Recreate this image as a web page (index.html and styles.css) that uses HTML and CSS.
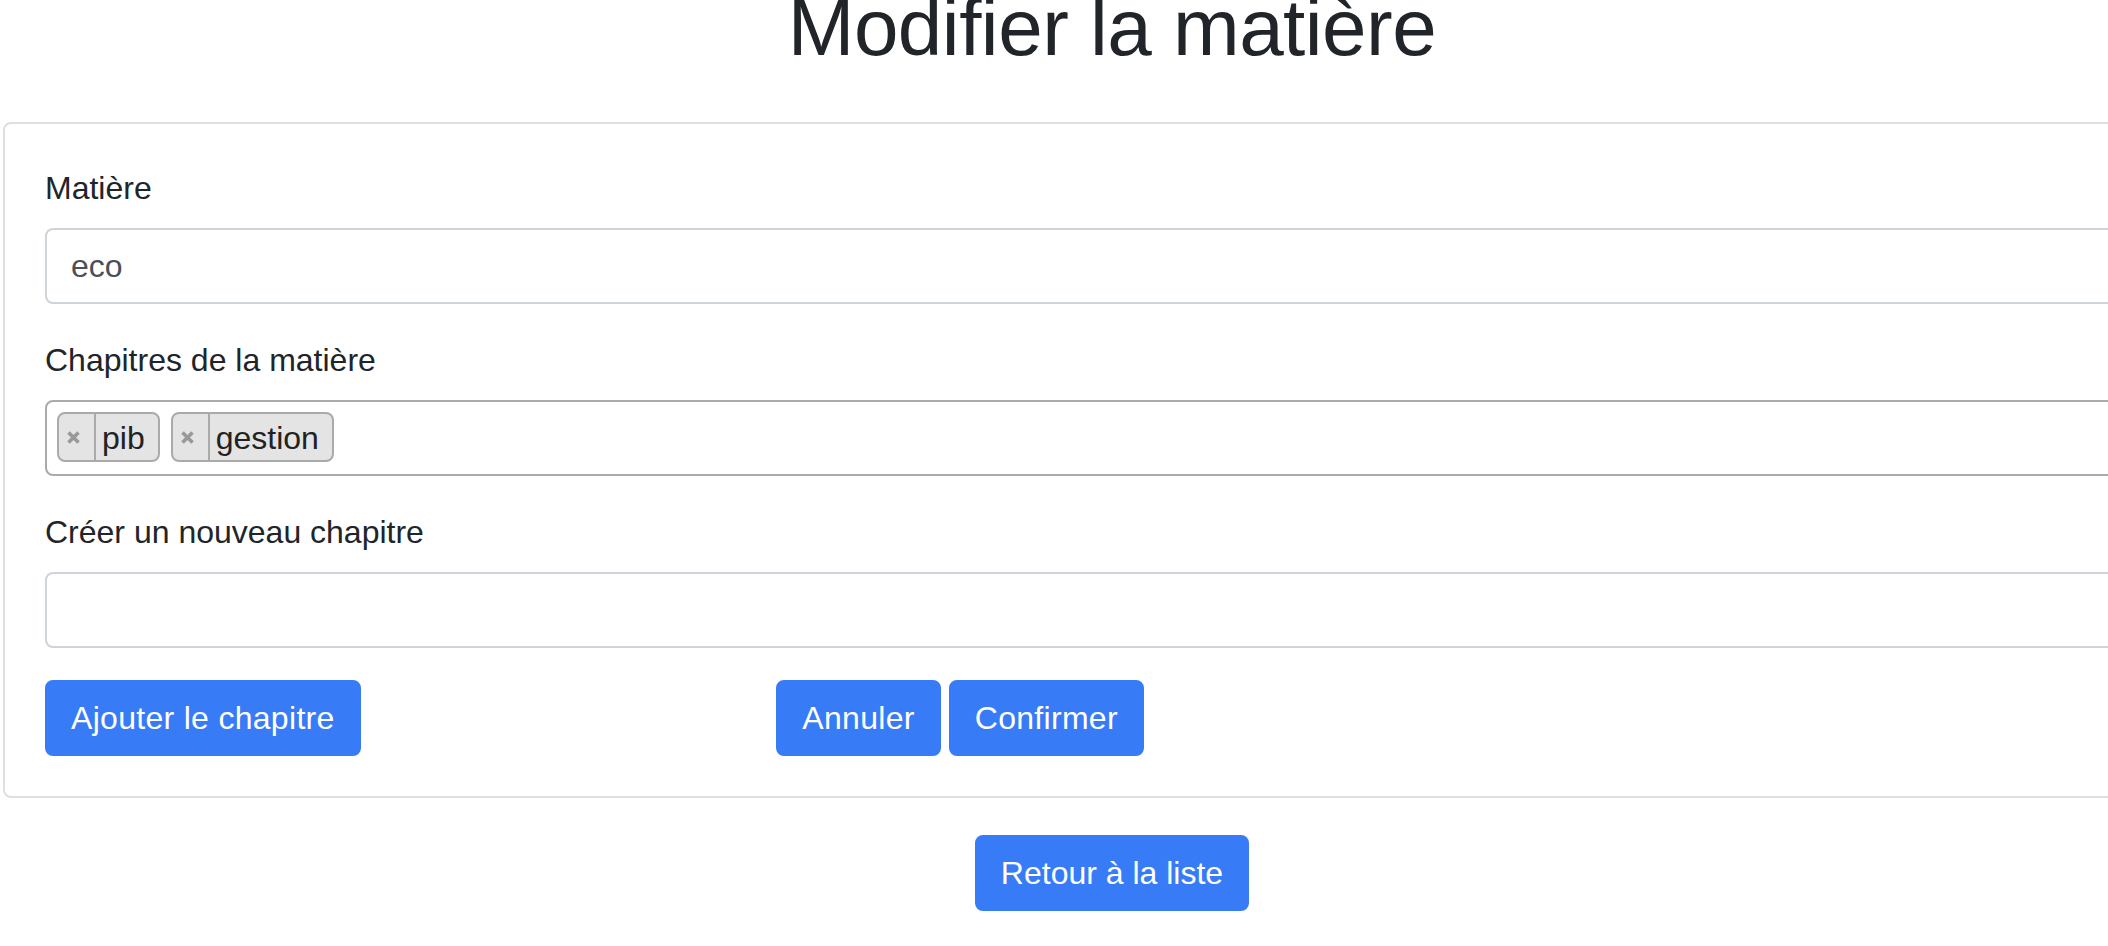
FILE: index.html
```html
<!DOCTYPE html>
<html lang="fr">
<head>
<meta charset="utf-8">
<title>Modifier la matière</title>
<link rel="stylesheet" href="styles.css">
</head>
<body>
<div class="page">
  <h1 class="title">Modifier la matière</h1>
  <div class="card">
    <div class="group">
      <label class="label">Matière</label>
      <input class="field" type="text" value="eco">
    </div>
    <div class="group">
      <label class="label">Chapitres de la matière</label>
      <div class="chips">
        <span class="chip"><span class="chip-remove"><svg width="13" height="13" viewBox="0 0 13 13"><path d="M1.5 1.5L11.5 11.5M11.5 1.5L1.5 11.5" stroke="#999" stroke-width="3.6" stroke-linecap="butt"/></svg></span><span class="chip-text">pib</span></span>
        <span class="chip"><span class="chip-remove"><svg width="13" height="13" viewBox="0 0 13 13"><path d="M1.5 1.5L11.5 11.5M11.5 1.5L1.5 11.5" stroke="#999" stroke-width="3.6" stroke-linecap="butt"/></svg></span><span class="chip-text">gestion</span></span>
      </div>
    </div>
    <div class="group">
      <label class="label">Créer un nouveau chapitre</label>
      <input class="field" type="text" value="">
    </div>
    <div class="actions">
      <div class="col"><button class="btn btn-wide">Ajouter le chapitre</button></div>
      <div class="col col-pair"><button class="btn btn-wide">Annuler</button><button class="btn btn-wide">Confirmer</button></div>
      <div class="col"></div>
    </div>
  </div>
  <div class="back">
    <button class="btn">Retour à la liste</button>
  </div>
</div>
</body>
</html>
```

FILE: styles.css
```css
html, body {
  margin: 0;
  padding: 0;
  overflow: hidden;
  background: #ffffff;
}

body {
  font-family: "Liberation Sans", Arial, sans-serif;
  color: #212529;
  font-size: 32px;
  line-height: 48px;
}

.page {
  width: 2218px;
  margin-left: 3px;
}

.title {
  margin: -20px 0 46px 0;
  font-size: 80px;
  line-height: 96px;
  font-weight: 400;
  letter-spacing: -0.5px;
  text-align: center;
  color: #212529;
}

.card {
  border: 2px solid #dfdfdf;
  border-radius: 8px;
  padding: 40px;
}

.group {
  margin-bottom: 32px;
}

.label {
  display: block;
  margin-bottom: 16px;
  line-height: 48px;
  color: #212529;
}

.field {
  display: block;
  box-sizing: border-box;
  width: 100%;
  height: 76px;
  padding: 12px 24px;
  border: 2px solid #ced4da;
  border-radius: 8px;
  font-family: "Liberation Sans", Arial, sans-serif;
  font-size: 32px;
  line-height: 48px;
  color: #495057;
  background: #ffffff;
  outline: none;
}

.chips {
  box-sizing: border-box;
  height: 76px;
  border: 2px solid #aaaaaa;
  border-radius: 8px;
  padding: 10px;
  display: flex;
  align-items: flex-start;
  gap: 11px;
}

.chip {
  box-sizing: border-box;
  height: 50px;
  display: inline-flex;
  align-items: stretch;
  background: #e4e4e4;
  border: 2px solid #aaaaaa;
  border-radius: 8px;
  color: #222222;
}

.chip-remove {
  box-sizing: border-box;
  width: 37px;
  padding-left: 8px;
  display: flex;
  align-items: center;
  border-right: 2px solid #aaaaaa;
}

.chip-text {
  display: flex;
  align-items: center;
  padding: 2px 13px 0 6px;
  line-height: 46px;
}

.actions {
  display: grid;
  grid-template-columns: 1fr 1fr 1fr;
  column-gap: 60px;
}

.col-pair {
  display: flex;
  gap: 8px;
}

.btn {
  box-sizing: border-box;
  height: 76px;
  padding: 12px 24px;
  border: 2px solid #387bf6;
  border-radius: 8px;
  background: #387bf6;
  color: #ffffff;
  font-family: "Liberation Sans", Arial, sans-serif;
  font-size: 32px;
  line-height: 48px;
  cursor: pointer;
}

.btn-wide {
  letter-spacing: 0.3px;
}

.back {
  margin-top: 37px;
  text-align: center;
}
```
